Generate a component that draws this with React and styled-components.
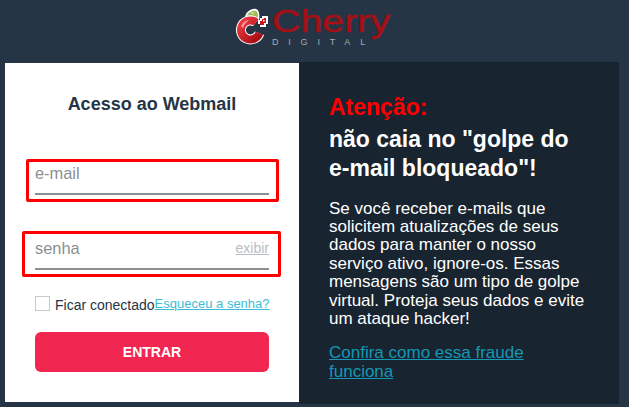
import React from "react";
import styled, { createGlobalStyle } from "styled-components";

const Global = createGlobalStyle`
  html, body {
    margin: 0;
    padding: 0;
    background: #253545;
    font-family: "Liberation Sans", Arial, sans-serif;
    overflow: hidden;
  }
`;

const Page = styled.div`
  width: 629px;
  height: 407px;
  background: #253545;
  overflow: hidden;
`;

const Header = styled.header`
  height: 62px;
  display: flex;
  justify-content: center;
  padding-right: 3px;
  box-sizing: border-box;
`;

const Logo = styled.div`
  display: flex;
  margin-top: 7px;
  height: 40px;
`;

const Wordmark = styled.div`
  display: flex;
  flex-direction: column;
  width: 118px;
  margin-left: 2px;
`;

const Brand = styled.div`
  color: #a60f14;
  font-size: 31px;
  line-height: 30px;
  height: 30px;
  -webkit-text-stroke: 0.4px #a60f14;
  transform-origin: left top;
  transform: scaleX(1.27);
`;

const Digital = styled.div`
  color: #a9acaf;
  font-size: 9px;
  line-height: 10px;
  letter-spacing: 9.8px;
  white-space: nowrap;
`;

const Main = styled.main`
  display: flex;
  align-items: flex-start;
  padding-left: 5px;
`;

const LoginPanel = styled.section`
  width: 294px;
  height: 339px;
  margin-top: 1px;
  background: #fff;
  box-sizing: border-box;
  padding: 31px 30px 0;
`;

const Title = styled.h1`
  margin: 0 0 45px;
  text-align: center;
  color: #253545;
  font-size: 18px;
  line-height: 20px;
  font-weight: 700;
`;

const FieldBox = styled.div`
  box-sizing: border-box;
  height: ${(p) => p.$height}px;
  margin: ${(p) => p.$margin};
  padding: ${(p) => p.$padding};
  border: 3px solid #fe0000;
  border-radius: 2px;
`;

const Field = styled.div`
  height: ${(p) => p.$height}px;
  display: flex;
  justify-content: space-between;
  align-items: flex-end;
  padding-bottom: ${(p) => p.$gap}px;
  border-bottom: 2px solid #8f8f8f;
  box-sizing: border-box;
`;

const Placeholder = styled.span`
  color: #8a8f94;
  font-size: 16.4px;
  line-height: 22px;
`;

const ShowLink = styled.a`
  color: #b9bdc1;
  font-size: 14px;
  line-height: 16px;
  margin-bottom: 3px;
  text-decoration: underline;
`;

const Options = styled.div`
  display: flex;
  align-items: flex-start;
  height: 17px;
  margin-top: 19px;
  white-space: nowrap;
`;

const CheckBox = styled.span`
  flex: none;
  width: 15px;
  height: 15px;
  box-sizing: border-box;
  border: 1px solid #c9c9c9;
  background: #fff;
  margin-right: 5px;
`;

const Remember = styled.span`
  color: #253545;
  font-size: 14px;
  line-height: 16px;
  margin-top: 1px;
`;

const Forgot = styled.a`
  color: #3bbdd6;
  font-size: 13px;
  line-height: 16px;
  text-decoration: underline;
`;

const Submit = styled.button`
  display: block;
  width: 234px;
  height: 40px;
  margin-top: 19px;
  border: 0;
  border-radius: 6px;
  background: #f12651;
  color: #fff;
  font-family: inherit;
  font-size: 14px;
  font-weight: 700;
`;

const NoticePanel = styled.section`
  width: 320px;
  height: 342px;
  background: #18242f;
  box-sizing: border-box;
  padding: 31px 30px 0;
  color: #fff;
`;

const NoticeTitle = styled.h2`
  margin: 0;
  font-size: 23px;
  line-height: 29.5px;
  font-weight: 700;
`;

const Alert = styled.span`
  display: block;
  color: #fe0000;
  margin-bottom: 2px;
`;

const NoticeText = styled.p`
  margin: 16px 0 0;
  font-size: 17px;
  line-height: 18.4px;
`;

const NoticeLink = styled.a`
  display: block;
  margin-top: 16px;
  color: #1597b5;
  font-size: 17px;
  line-height: 18.4px;
  text-decoration: underline;
`;

function CherryMark() {
  return (
    <svg width="34" height="40" viewBox="0 0 34 40" aria-hidden="true">
      <defs>
        <linearGradient id="cherryRed" x1="0" y1="0" x2="1" y2="1">
          <stop offset="0" stopColor="#ee3a42" />
          <stop offset="1" stopColor="#a30c14" />
        </linearGradient>
      </defs>
      <path d="M9 10C10 5 15 1 20 2c3 1 4 5 3 11-4-3-9-4-14-3z" fill="#fff" />
      <path d="M11 9c1-3 5-6 9-5 2 1 2 4 2 7-3-2-7-3-11-2z" fill="#9dbb55" />
      <path d="M14 6c2-1 4-1 5 0-1 1-3 1-5 0z" fill="#dbe7ab" />
      <path d="M20 15.2A9.5 9.5 0 1 0 23.4 26.2" fill="none" stroke="#fff" strokeWidth="10" />
      <path d="M20 15.2A9.5 9.5 0 1 0 23.4 26.2" fill="none" stroke="url(#cherryRed)" strokeWidth="8" />
      <path d="M5 19c2-4 5-6 8-6-2 2-5 4-6 8z" fill="#f79a9d" />
      <path d="M22 13h2v-2h2V9h6v8h-2v3h-6v-3h-2z" fill="#fff" />
      <path d="M24 14h2v-2h2v-1h2v5h-2v2h-4z" fill="#c8141c" />
      <path d="M27 13h1.5v1.5H27z" fill="#fff" />
    </svg>
  );
}

export default function App() {
  return (
    <Page>
      <Global />
      <Header>
        <Logo>
          <CherryMark />
          <Wordmark>
            <Brand>Cherry</Brand>
            <Digital>DIGITAL</Digital>
          </Wordmark>
        </Logo>
      </Header>
      <Main>
        <LoginPanel>
          <Title>Acesso ao Webmail</Title>
          <FieldBox $height={43} $margin="0 -10px 0 -9px" $padding="0 7px 0 6px">
            <Field $height={33} $gap={9}>
              <Placeholder>e-mail</Placeholder>
            </Field>
          </FieldBox>
          <FieldBox $height={46} $margin="29px -12px 0 -13px" $padding="0 9px 0 10px">
            <Field $height={36} $gap={9}>
              <Placeholder>senha</Placeholder>
              <ShowLink>exibir</ShowLink>
            </Field>
          </FieldBox>
          <Options>
            <CheckBox />
            <Remember>Ficar conectado</Remember>
            <Forgot>Esqueceu a senha?</Forgot>
          </Options>
          <Submit>ENTRAR</Submit>
        </LoginPanel>
        <NoticePanel>
          <NoticeTitle>
            <Alert>Atenção:</Alert>
            não caia no "golpe do
            <br />
            e-mail bloqueado"!
          </NoticeTitle>
          <NoticeText>
            Se você receber e-mails que
            <br />
            solicitem atualizações de seus
            <br />
            dados para manter o nosso
            <br />
            serviço ativo, ignore-os. Essas
            <br />
            mensagens são um tipo de golpe
            <br />
            virtual. Proteja seus dados e evite
            <br />
            um ataque hacker!
          </NoticeText>
          <NoticeLink>
            Confira como essa fraude
            <br />
            funciona
          </NoticeLink>
        </NoticePanel>
      </Main>
    </Page>
  );
}
